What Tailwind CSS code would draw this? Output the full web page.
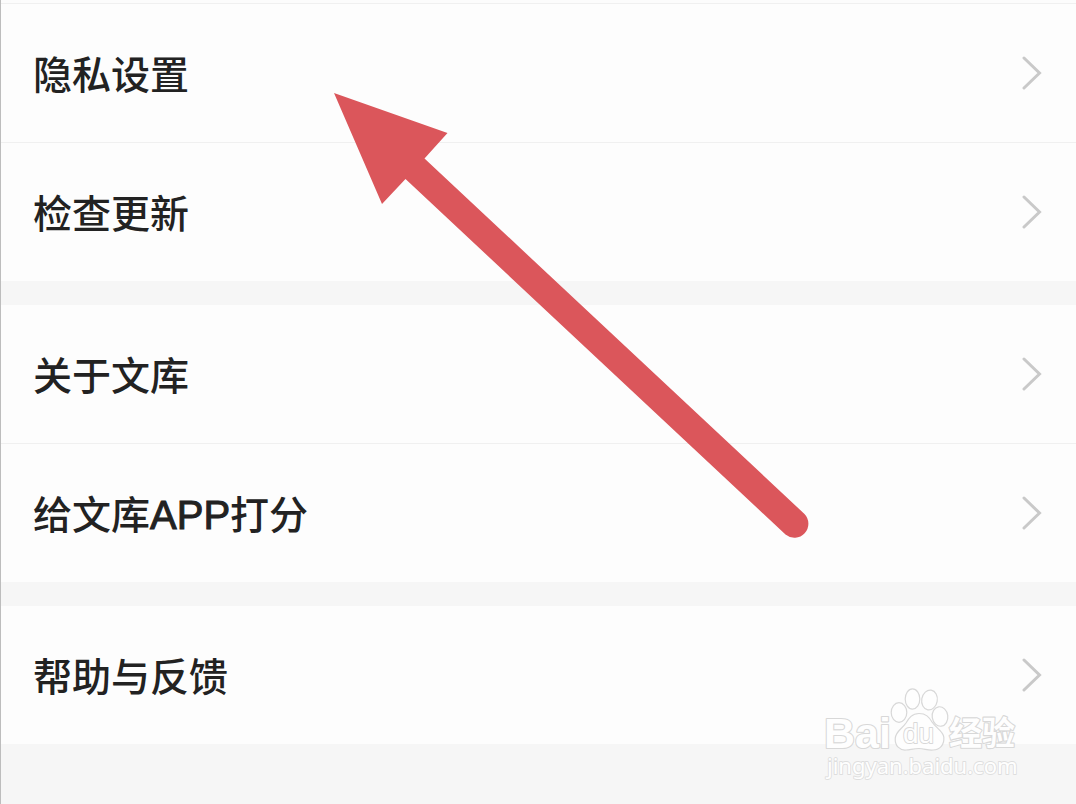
<!DOCTYPE html>
<html lang="zh-CN">
<head>
<meta charset="utf-8">
<meta name="viewport" content="width=device-width, initial-scale=1">
<title>设置</title>
<script src="https://cdn.jsdelivr.net/npm/@tailwindcss/browser@4"></script>
</head>
<body class="relative min-h-screen overflow-x-hidden border-l border-[#bdbdbd] bg-[#f6f6f6] font-[family-name:Inter,Noto_Sans_CJK_SC,sans-serif] text-[39px] leading-[56px] font-medium text-[#222222]">
<svg class="hidden"><symbol id="chevron" viewBox="0 0 20 34"><path d="M2 2 L17.500 17 L2 32" fill="none" stroke="#c9c9c9" stroke-width="3" stroke-linecap="round" stroke-linejoin="miter"/></symbol></svg>
<main class="flex flex-col gap-6">
  <nav class="border-t-[3px] border-[#fcfcfc] bg-[#fdfdfd]">
    <a href="#privacy" class="flex h-[139px] items-center justify-between border-t border-[#f0f0f0] pr-[34px] pl-8"><span class="pt-1">隐私设置</span><svg class="h-[34px] w-5" aria-hidden="true"><use href="#chevron"/></svg></a>
    <a href="#update" class="flex h-[139px] items-center justify-between border-t border-[#f0f0f0] pr-[34px] pl-8"><span class="pt-1">检查更新</span><svg class="h-[34px] w-5" aria-hidden="true"><use href="#chevron"/></svg></a>
  </nav>
  <nav class="bg-[#fdfdfd]">
    <a href="#about" class="flex h-[138px] items-center justify-between pr-[34px] pl-8"><span class="pt-1">关于文库</span><svg class="h-[34px] w-5" aria-hidden="true"><use href="#chevron"/></svg></a>
    <a href="#rate" class="flex h-[139px] items-center justify-between border-t border-[#f0f0f0] pr-[34px] pl-8"><span class="pt-1">给文库<span class="font-['Liberation_Sans'] text-[40px] [-webkit-text-stroke:1px_#222222]">APP</span>打分</span><svg class="h-[34px] w-5" aria-hidden="true"><use href="#chevron"/></svg></a>
  </nav>
  <nav class="bg-[#fdfdfd]">
    <a href="#help" class="flex h-[138px] items-center justify-between pr-[34px] pl-8"><span class="pt-1">帮助与反馈</span><svg class="h-[34px] w-5" aria-hidden="true"><use href="#chevron"/></svg></a>
  </nav>
</main>

<!-- Pointer to the privacy row -->
<svg class="pointer-events-none absolute top-[93px] left-[333px] h-[446px] w-[476px]" viewBox="334 93 476 446" aria-hidden="true">
  <path d="M334 93 L447.500 133 L424.500 158.500 L804.500 514 A14 14 0 0 1 785.500 534.500 L405.500 179 L382 204 Z" fill="#db565b"/>
</svg>

<!-- Watermark -->
<svg class="pointer-events-none absolute right-[46px] bottom-[14px] h-[110px] w-[210px]" viewBox="820 680 210 110" role="img" aria-label="Baidu 经验">
  <g fill="#fefefe" stroke="#d8d8d8" stroke-width="1.200" stroke-linejoin="round">
    <g stroke-width="2.200" paint-order="stroke">
      <text x="824" y="748" font-family="Liberation Sans, sans-serif" font-size="43" font-weight="700">Bai</text>
      <text x="949" y="745" font-family="Noto Sans CJK SC, sans-serif" font-size="33" font-weight="700">经验</text>
    </g>
    <ellipse cx="899" cy="712.500" rx="7.800" ry="9.800"/>
    <ellipse cx="912.500" cy="699" rx="7.300" ry="10.200"/>
    <ellipse cx="929.500" cy="700" rx="7.800" ry="10" transform="rotate(10 929.500 700)"/>
    <ellipse cx="940" cy="716.500" rx="7.800" ry="9.800" transform="rotate(-8 940 716.500)"/>
    <path d="M919 713.500 C912 713.500 909 718 906 723 C902 729 896 731 895.300 738 C894.500 746 900 750.500 906 750 C911 749.500 914 748.500 919 748.500 C924 748.500 928 750.500 933 750 C940 749.500 944.500 745 943.800 737 C943 731 936 728 932 722 C929 717 926 713.500 919 713.500 Z"/>
    <text x="903" y="743" font-family="Liberation Sans, sans-serif" font-size="28" font-weight="400" stroke-width="1.800" paint-order="stroke">du</text>
    <text x="827" y="774" font-family="Noto Sans, sans-serif" font-size="22" font-weight="400" stroke="#dedede" stroke-width="1.800" paint-order="stroke">jingyan.baidu.com</text>
  </g>
</svg>
</body>
</html>
